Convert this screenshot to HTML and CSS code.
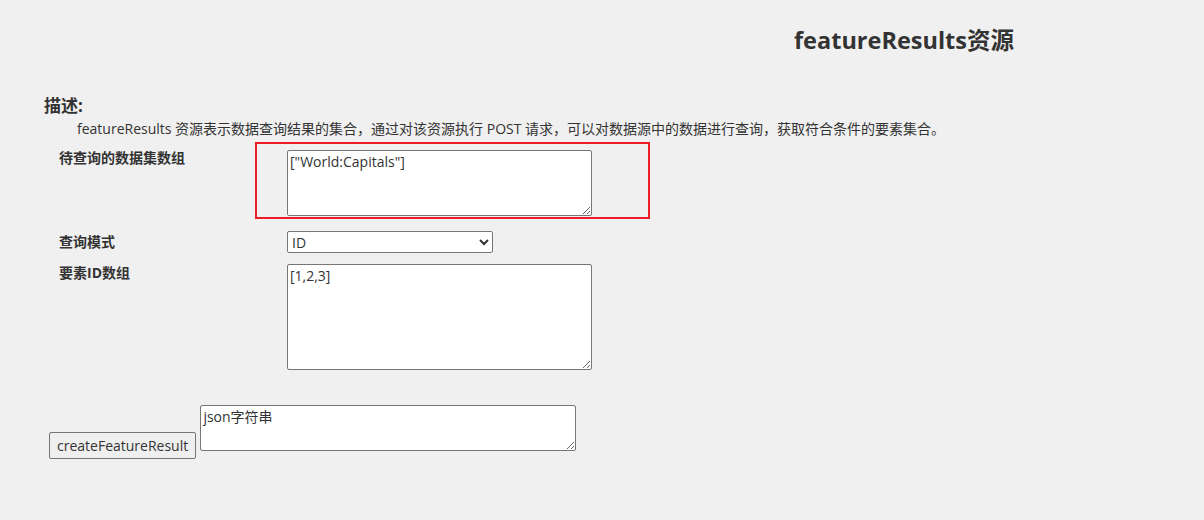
FILE: index.html
```html
<!DOCTYPE html>
<html lang="zh-CN">
<head>
    <meta charset="UTF-8">
    <meta name="viewport" content="width=device-width, initial-scale=1.0">
    <title>featureResults资源</title>
    <link rel="stylesheet" href="styles.css">
</head>
<body>
    <h1 class="title">featureResults资源</h1>
    <div class="desc">
        <h3>描述:</h3>
        <p>featureResults 资源表示数据查询结果的集合，通过对该资源执行 POST 请求，可以对数据源中的数据进行查询，获取符合条件的要素集合。</p>
    </div>
    <div class="form">
        <div class="row">
            <div class="label">待查询的数据集数组</div>
            <div class="field highlight">
                <textarea class="ta-small">["World:Capitals"]</textarea>
            </div>
        </div>
        <div class="row row-select">
            <div class="label">查询模式</div>
            <div class="field">
                <select class="mode">
                    <option>ID</option>
                    <option>SQL</option>
                </select>
            </div>
        </div>
        <div class="row row-ids">
            <div class="label">要素ID数组</div>
            <div class="field">
                <textarea class="ta-big">[1,2,3]</textarea>
            </div>
        </div>
    </div>
    <div class="submit">
        <button>createFeatureResult</button>
        <textarea class="result">json字符串</textarea>
    </div>
</body>
</html>
```

FILE: styles.css
```css
body {
    margin: 8px;
    background-color: #f0f0f0;
    color: #333;
    font-family: "Open Sans", "Noto Sans CJK SC", sans-serif;
}
.title {
    margin: 15px 0 0 786px;
    font-size: 23.5px;
    font-weight: bold;
    line-height: 34px;
}
.desc {
    margin-top: 37px;
    margin-left: 36px;
}
.desc h3 {
    margin: 0;
    font-size: 17px;
    line-height: 24px;
}
.desc p {
    margin: 0 0 0 33px;
    font-size: 14px;
    line-height: 22px;
}
.form {
    margin-left: 41px;
    margin-top: 2px;
}
.row {
    display: flex;
}
.label {
    width: 196px;
    padding: 6px 0 0 10px;
    font-size: 14px;
    font-weight: bold;
    line-height: 20px;
}
.field {
    width: 361px;
    padding: 5px 0 0 32px;
    line-height: 0;
}
.highlight {
    border: 2px solid #ee1c25;
    padding: 6px 0 1px 30px;
}
.row-select {
    margin-top: 7px;
}
.row-select .label {
    padding-top: 6px;
}
.row-ids {
    margin-top: 6px;
}
.row-ids .label {
    padding-top: 4px;
}
textarea {
    box-sizing: border-box;
    margin: 0;
    padding: 2px;
    border: 1px solid #767676;
    border-radius: 2px;
    background: #fff;
    color: #333;
    font-family: "Open Sans", "Noto Sans CJK SC", sans-serif;
    font-size: 14px;
    line-height: 18px;
    vertical-align: baseline;
}
.ta-small {
    width: 305px;
    height: 66px;
}
.ta-big {
    width: 305px;
    height: 106px;
}
.mode {
    box-sizing: border-box;
    width: 206px;
    height: 22px;
    margin: 0;
    border: 1px solid #767676;
    border-radius: 2px;
    background: #fff;
    color: #333;
    font-family: "Open Sans", sans-serif;
    font-size: 14px;
}
.submit {
    margin: 35px 0 0 41px;
}
button {
    height: 27px;
    margin: 0;
    padding: 0 7px;
    border: 1px solid #767676;
    border-radius: 2px;
    background-color: #efefef;
    color: #333;
    font-family: "Open Sans", sans-serif;
    font-size: 14px;
}
.result {
    width: 376px;
    height: 46px;
}
```
